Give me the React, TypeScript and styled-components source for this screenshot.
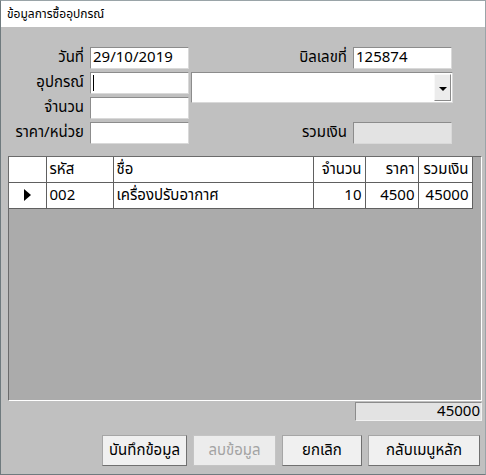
import React from "react";
import styled, { createGlobalStyle } from "styled-components";

const Global = createGlobalStyle`
  html, body { margin: 0; padding: 0; background: #ffffff; }
  body { font-family: Tahoma, "Leelawadee UI", "Noto Sans Thai", "Noto Sans", "DejaVu Sans", sans-serif; }
  * { box-sizing: border-box; }
`;

const Window = styled.div`
  width: 486px;
  height: 475px;
  display: flex;
  flex-direction: column;
  border: 1px solid #6f7a7e;
  border-top-color: #9aa4a8;
  border-right-color: #9aa4a8;
  background: #c0c0c0;
  overflow: hidden;
`;

const TitleBar = styled.div`
  height: 26px;
  background: #ffffff;
  display: flex;
  align-items: center;
  padding-left: 6px;
  font-size: 12px;
  color: #000;
`;

const Body = styled.div`
  flex: 1;
  display: flex;
  flex-direction: column;
  padding: 20px 3px 7px 6px;
`;

const Form = styled.div`
  display: grid;
  grid-template-columns: 80px 99px 158px 99px;
  grid-template-rows: repeat(4, 22px);
  column-gap: 3px;
  row-gap: 3px;
  font-size: 15px;
`;

const Label = styled.div<{ $col?: number; $row: number }>`
  grid-column: ${(p) => p.$col ?? 1};
  grid-row: ${(p) => p.$row};
  text-align: right;
  line-height: 22px;
  padding-right: 3px;
  color: #000;
  white-space: nowrap;
`;

const Input = styled.div<{ $col?: number; $row: number; $disabled?: boolean }>`
  grid-column: ${(p) => p.$col ?? 2};
  grid-row: ${(p) => p.$row};
  background: ${(p) => (p.$disabled ? "#e3e3e3" : "#ffffff")};
  border: 1px solid;
  border-color: #8c8c8c #d9d9d9 #d9d9d9 #8c8c8c;
  line-height: 20px;
  padding-left: 2px;
  font-size: 15px;
  color: #000;
  position: relative;
`;

const Caret = styled.span`
  position: absolute;
  left: 2px;
  top: 2px;
  width: 1px;
  height: 16px;
  background: #000;
`;

const Combo = styled.div`
  grid-column: 3 / 5;
  grid-row: 2 / 4;
  align-self: start;
  margin-left: -1px;
  margin-right: -1px;
  height: 31px;
  background: #ffffff;
  border: 1px solid;
  border-color: #8c8c8c #d9d9d9 #d9d9d9 #8c8c8c;
  display: flex;
  justify-content: flex-end;
  padding: 1px;
`;

const DropButton = styled.div`
  width: 17px;
  height: 100%;
  background: #ececec;
  border: 1px solid;
  border-color: #f8f8f8 #8a8a8a #8a8a8a #f8f8f8;
  display: flex;
  align-items: center;
  justify-content: center;
  padding-top: 2px;
`;

const Arrow = styled.div`
  width: 0;
  height: 0;
  border-left: 4px solid transparent;
  border-right: 4px solid transparent;
  border-top: 4px solid #000;
`;

const GridBox = styled.div`
  margin-top: 12px;
  height: 245px;
  background: #ababab;
  border: 1px solid #6b6b6b;
  border-right-color: #ffffff;
  border-bottom-color: #ffffff;
  margin-left: 1px;
  overflow: hidden;
`;

const Table = styled.table`
  border-collapse: collapse;
  table-layout: fixed;
  width: 463px;
  font-size: 15px;
  background: #ffffff;
`;

const HeadCell = styled.th<{ $right?: boolean; $first?: boolean }>`
  height: 25px;
  padding: 0 3px;
  font-weight: normal;
  text-align: ${(p) => (p.$right ? "right" : "left")};
  border: 1px solid #606060;
  border-top: none;
  border-left: ${(p) => (p.$first ? "none" : "1px solid #606060")};
  background: #ffffff;
  white-space: nowrap;
  overflow: hidden;
`;

const Cell = styled.td<{ $right?: boolean }>`
  height: 26px;
  padding: 0 3px;
  text-align: ${(p) => (p.$right ? "right" : "left")};
  border: 1px solid #606060;
  white-space: nowrap;
  overflow: hidden;
`;

const RowHead = styled.td`
  height: 26px;
  border: 1px solid #606060;
  border-left: none;
  text-align: center;
  padding: 0;
`;

const Pointer = styled.span`
  display: inline-block;
  width: 0;
  height: 0;
  border-top: 6px solid transparent;
  border-bottom: 6px solid transparent;
  border-left: 7px solid #000;
  vertical-align: middle;
`;

const TotalRow = styled.div`
  display: flex;
  justify-content: flex-end;
  margin-top: 1px;
`;

const TotalBox = styled.div`
  width: 127px;
  height: 19px;
  background: #e3e3e3;
  border: 1px solid;
  border-color: #8c8c8c #f2f2f2 #f2f2f2 #8c8c8c;
  text-align: right;
  font-size: 15px;
  line-height: 17px;
  padding-right: 1px;
`;

const Buttons = styled.div`
  display: flex;
  justify-content: flex-end;
  gap: 6px;
  margin-top: 14px;
  padding-right: 2px;
`;

const Button = styled.div<{ $w: number; $disabled?: boolean }>`
  width: ${(p) => p.$w}px;
  height: 31px;
  display: flex;
  align-items: center;
  justify-content: center;
  font-size: 15px;
  color: ${(p) => (p.$disabled ? "#a3a3a3" : "#000")};
  background: ${(p) => (p.$disabled ? "#ececec" : "#f0f0f0")};
  border: 1px solid ${(p) => (p.$disabled ? "#c4c4c4" : "#a6a6a6")};
  border-right-color: ${(p) => (p.$disabled ? "#c4c4c4" : "#707070")};
  border-bottom-color: ${(p) => (p.$disabled ? "#c4c4c4" : "#707070")};
`;

const cols = [37, 67, 200, 52, 53, 54];

export default function App() {
  return (
    <>
      <Global />
      <Window>
        <TitleBar>ข้อมูลการซื้ออุปกรณ์</TitleBar>
        <Body>
          <Form>
            <Label $row={1}>วันที่</Label>
            <Input $row={1}>29/10/2019</Input>
            <Label $row={1} $col={3}>บิลเลขที่</Label>
            <Input $row={1} $col={4}>125874</Input>

            <Label $row={2}>อุปกรณ์</Label>
            <Input $row={2}>
              <Caret />
            </Input>
            <Combo>
              <DropButton>
                <Arrow />
              </DropButton>
            </Combo>

            <Label $row={3}>จำนวน</Label>
            <Input $row={3} />

            <Label $row={4}>ราคา/หน่วย</Label>
            <Input $row={4} />
            <Label $row={4} $col={3}>รวมเงิน</Label>
            <Input $row={4} $col={4} $disabled />
          </Form>

          <GridBox>
            <Table>
              <colgroup>
                {cols.map((w, i) => (
                  <col key={i} style={{ width: w }} />
                ))}
              </colgroup>
              <thead>
                <tr>
                  <HeadCell $first />
                  <HeadCell>รหัส</HeadCell>
                  <HeadCell>ชื่อ</HeadCell>
                  <HeadCell $right>จำนวน</HeadCell>
                  <HeadCell $right>ราคา</HeadCell>
                  <HeadCell $right>รวมเงิน</HeadCell>
                </tr>
              </thead>
              <tbody>
                <tr>
                  <RowHead>
                    <Pointer />
                  </RowHead>
                  <Cell>002</Cell>
                  <Cell>เครื่องปรับอากาศ</Cell>
                  <Cell $right>10</Cell>
                  <Cell $right>4500</Cell>
                  <Cell $right>45000</Cell>
                </tr>
              </tbody>
            </Table>
          </GridBox>

          <TotalRow>
            <TotalBox>45000</TotalBox>
          </TotalRow>

          <Buttons>
            <Button $w={85}>บันทึกข้อมูล</Button>
            <Button $w={83} $disabled>ลบข้อมูล</Button>
            <Button $w={80}>ยกเลิก</Button>
            <Button $w={112}>กลับเมนูหลัก</Button>
          </Buttons>
        </Body>
      </Window>
    </>
  );
}
